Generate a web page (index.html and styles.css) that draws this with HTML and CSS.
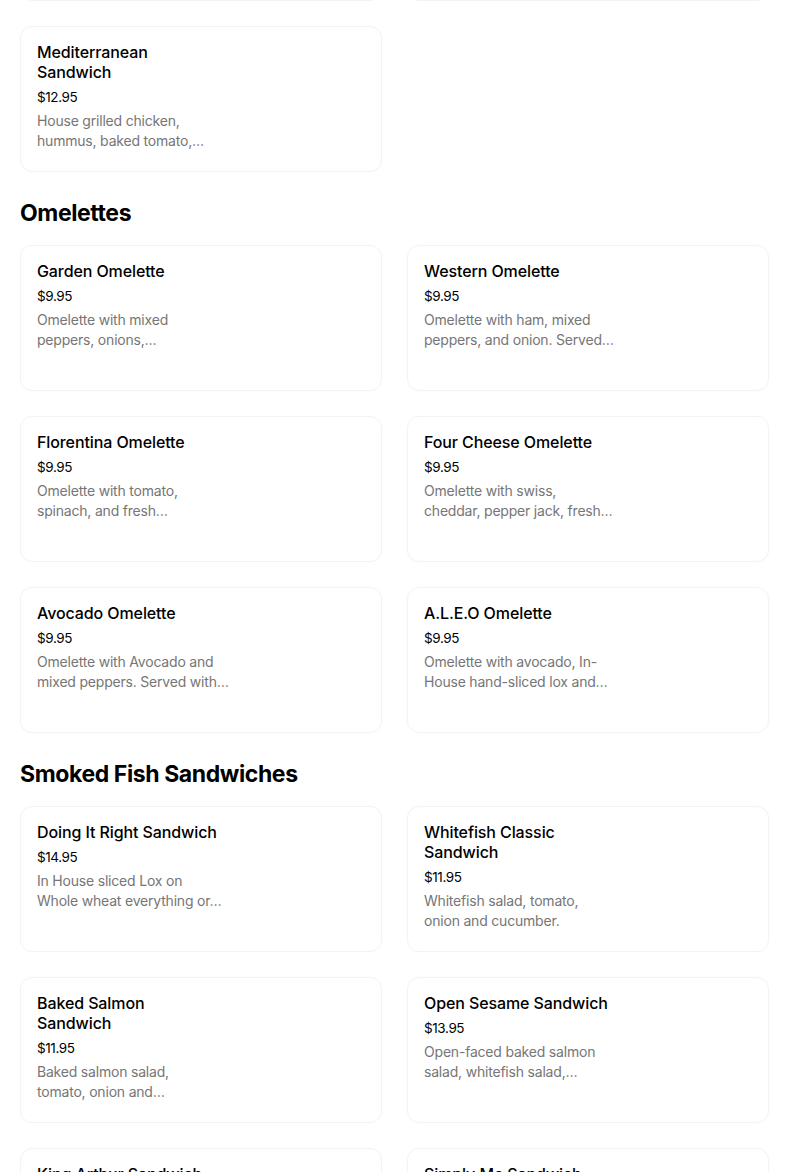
FILE: index.html
```html
<!DOCTYPE html>
<html lang="en">
<head>
<meta charset="utf-8">
<title>Menu</title>
<link rel="stylesheet" href="styles.css">
</head>
<body>
<main class="menu">
  <section class="section section-scrolled">
    <div class="grid">
      <div class="card"></div>
      <div class="card"></div>
      <div class="card">
        <div class="info">
          <div class="title">Mediterranean<br>Sandwich</div>
          <div class="price">$12.95</div>
          <div class="desc"><span>House grilled chicken,</span><span>hummus, baked tomato,…</span></div>
        </div>
      </div>
    </div>
  </section>

  <section class="section">
    <h2 class="heading">Omelettes</h2>
    <div class="grid">
      <div class="card"><div class="info">
        <div class="title">Garden Omelette</div>
        <div class="price">$9.95</div>
        <div class="desc"><span>Omelette with mixed</span><span>peppers, onions,…</span></div>
      </div></div>
      <div class="card"><div class="info">
        <div class="title">Western Omelette</div>
        <div class="price">$9.95</div>
        <div class="desc"><span>Omelette with ham, mixed</span><span>peppers, and onion. Served…</span></div>
      </div></div>
      <div class="card"><div class="info">
        <div class="title">Florentina Omelette</div>
        <div class="price">$9.95</div>
        <div class="desc"><span>Omelette with tomato,</span><span>spinach, and fresh…</span></div>
      </div></div>
      <div class="card"><div class="info">
        <div class="title">Four Cheese Omelette</div>
        <div class="price">$9.95</div>
        <div class="desc"><span>Omelette with swiss,</span><span>cheddar, pepper jack, fresh…</span></div>
      </div></div>
      <div class="card"><div class="info">
        <div class="title">Avocado Omelette</div>
        <div class="price">$9.95</div>
        <div class="desc"><span>Omelette with Avocado and</span><span>mixed peppers. Served with…</span></div>
      </div></div>
      <div class="card"><div class="info">
        <div class="title">A.L.E.O Omelette</div>
        <div class="price">$9.95</div>
        <div class="desc"><span>Omelette with avocado, In-</span><span>House hand-sliced lox and…</span></div>
      </div></div>
    </div>
  </section>

  <section class="section">
    <h2 class="heading">Smoked Fish Sandwiches</h2>
    <div class="grid">
      <div class="card"><div class="info">
        <div class="title">Doing It Right Sandwich</div>
        <div class="price">$14.95</div>
        <div class="desc"><span>In House sliced Lox on</span><span>Whole wheat everything or…</span></div>
      </div></div>
      <div class="card"><div class="info">
        <div class="title">Whitefish Classic<br>Sandwich</div>
        <div class="price">$11.95</div>
        <div class="desc"><span>Whitefish salad, tomato,</span><span>onion and cucumber.</span></div>
      </div></div>
      <div class="card"><div class="info">
        <div class="title">Baked Salmon<br>Sandwich</div>
        <div class="price">$11.95</div>
        <div class="desc"><span>Baked salmon salad,</span><span>tomato, onion and…</span></div>
      </div></div>
      <div class="card"><div class="info">
        <div class="title">Open Sesame Sandwich</div>
        <div class="price">$13.95</div>
        <div class="desc"><span>Open-faced baked salmon</span><span>salad, whitefish salad,…</span></div>
      </div></div>
      <div class="card"><div class="info">
        <div class="title">King Arthur Sandwich</div>
        <div class="price">$12.95</div>
      </div></div>
      <div class="card"><div class="info">
        <div class="title">Simply Me Sandwich</div>
        <div class="price">$10.95</div>
      </div></div>
    </div>
  </section>
</main>
</body>
</html>
```

FILE: styles.css
```css
* { box-sizing: border-box; }

html, body {
  margin: 0;
  padding: 0;
  background: #ffffff;
  overflow: hidden;
}

body {
  font-family: Inter, "Noto Sans", "Liberation Sans", sans-serif;
  color: #000000;
}

.menu {
  padding: 0 35px 0 20px;
  display: flex;
  flex-direction: column;
}

.section-scrolled {
  margin-top: -145px;
}

.heading {
  margin: 25px 0 16px;
  font-size: 23px;
  line-height: 32px;
  font-weight: 700;
  letter-spacing: -0.4px;
}

.grid {
  display: grid;
  grid-template-columns: 1fr 1fr;
  column-gap: 25px;
  row-gap: 25px;
}

.card {
  height: 146px;
  border: 1px solid #f3f3f3;
  border-radius: 12px;
  box-shadow: 0 0 2px rgba(0, 0, 0, 0.025);
  padding: 15px 16px;
  display: flex;
}

.info {
  width: 200px;
  display: flex;
  flex-direction: column;
}

.title {
  font-size: 16px;
  line-height: 20px;
  font-weight: 500;
  letter-spacing: -0.1px;
}

.price {
  margin-top: 5px;
  font-size: 13.5px;
  line-height: 20px;
  letter-spacing: -0.4px;
}

.desc {
  margin-top: 4px;
  font-size: 14px;
  line-height: 20px;
  color: #767676;
  letter-spacing: -0.2px;
  display: flex;
  flex-direction: column;
}

.desc span {
  white-space: nowrap;
}
```
